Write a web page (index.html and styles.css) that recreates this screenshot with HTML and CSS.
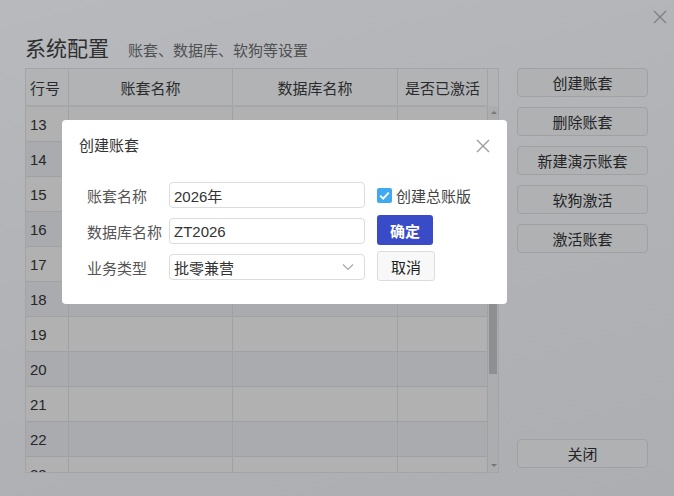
FILE: index.html
```html
<!DOCTYPE html>
<html lang="zh">
<head>
<meta charset="utf-8">
<title>系统配置</title>
<link rel="stylesheet" href="styles.css">
</head>
<body>
<div class="window">
  <svg class="win-close" width="14" height="14" viewBox="0 0 14 14"><path d="M1 1L13 13M13 1L1 13" stroke="#7d7f82" stroke-width="1.3" fill="none"/></svg>
  <div class="header">
    <span class="title">系统配置</span>
    <span class="subtitle">账套、数据库、软狗等设置</span>
  </div>
  <div class="body">
    <div class="table">
      <div class="grid">
        <div class="thead">
          <div class="th c1">行号</div>
          <div class="th c2">账套名称</div>
          <div class="th c3">数据库名称</div>
          <div class="th c4">是否已激活</div>
        </div>
        <div class="rows">
          <div class="tr odd"><div class="td c1">13</div><div class="td c2"></div><div class="td c3"></div><div class="td c4"></div></div>
          <div class="tr"><div class="td c1">14</div><div class="td c2"></div><div class="td c3"></div><div class="td c4"></div></div>
          <div class="tr odd"><div class="td c1">15</div><div class="td c2"></div><div class="td c3"></div><div class="td c4"></div></div>
          <div class="tr"><div class="td c1">16</div><div class="td c2"></div><div class="td c3"></div><div class="td c4"></div></div>
          <div class="tr odd"><div class="td c1">17</div><div class="td c2"></div><div class="td c3"></div><div class="td c4"></div></div>
          <div class="tr"><div class="td c1">18</div><div class="td c2"></div><div class="td c3"></div><div class="td c4"></div></div>
          <div class="tr odd"><div class="td c1">19</div><div class="td c2"></div><div class="td c3"></div><div class="td c4"></div></div>
          <div class="tr"><div class="td c1">20</div><div class="td c2"></div><div class="td c3"></div><div class="td c4"></div></div>
          <div class="tr odd"><div class="td c1">21</div><div class="td c2"></div><div class="td c3"></div><div class="td c4"></div></div>
          <div class="tr"><div class="td c1">22</div><div class="td c2"></div><div class="td c3"></div><div class="td c4"></div></div>
          <div class="tr odd"><div class="td c1">23</div><div class="td c2"></div><div class="td c3"></div><div class="td c4"></div></div>
        </div>
      </div>
      <div class="scrollbar">
        <div class="sb-head"></div>
        <div class="sb-track">
          <span class="arrow up"></span>
          <div class="thumb"></div>
          <span class="arrow down"></span>
        </div>
      </div>
    </div>
    <div class="side">
      <button class="btn">创建账套</button>
      <button class="btn">删除账套</button>
      <button class="btn">新建演示账套</button>
      <button class="btn">软狗激活</button>
      <button class="btn">激活账套</button>
      <button class="btn close-btn">关闭</button>
    </div>
  </div>

  <div class="dialog">
    <div class="dlg-head">
      <span class="dlg-title">创建账套</span>
      <svg class="dlg-close" width="14" height="14" viewBox="0 0 14 14"><path d="M1 1L13 13M13 1L1 13" stroke="#9a9a9a" stroke-width="1.3" fill="none"/></svg>
    </div>
    <div class="form">
      <label class="lbl">账套名称</label>
      <div class="input">2026年</div>
      <div class="extra">
        <span class="checkbox"><svg width="15" height="15" viewBox="0 0 15 15"><rect width="15" height="15" rx="2" fill="#40a9f0"/><path d="M3.2 7.6L6.2 10.6L11.8 4.6" stroke="#fff" stroke-width="2" fill="none"/></svg></span>
        <span class="check-text">创建总账版</span>
      </div>
      <label class="lbl">数据库名称</label>
      <div class="input">ZT2026</div>
      <div class="extra"><button class="primary">确定</button></div>
      <label class="lbl">业务类型</label>
      <div class="input select">批零兼营<svg class="chev" width="12" height="8" viewBox="0 0 12 8"><path d="M1 1.5L6 6.5L11 1.5" stroke="#aaa" stroke-width="1.2" fill="none"/></svg></div>
      <div class="extra"><button class="secondary">取消</button></div>
    </div>
  </div>
</div>
</body>
</html>
```

FILE: styles.css
```css
* { box-sizing: border-box; }
html, body { margin: 0; padding: 0; }
body {
  font-family: "Liberation Sans", "Noto Sans CJK SC", sans-serif;
  font-size: 15px;
  color: #2a2b2c;
}
.window {
  position: relative;
  width: 674px;
  height: 496px;
  overflow: hidden;
  background: linear-gradient(165deg, #b7b9bc 0%, #b1b3b6 45%, #acaeb1 100%);
  padding: 30px 26px 0 25px;
}
.win-close { position: absolute; left: 653px; top: 10px; }
.header {
  display: flex;
  align-items: baseline;
  height: 38px;
  padding-top: 2px;
}
.title { font-size: 21px; color: #2e2f30; }
.subtitle { font-size: 15px; color: #4f5052; margin-left: 19px; }
.body { display: flex; gap: 18px; }
.table {
  display: flex;
  width: 475px;
  height: 405px;
  border: 1px solid #a2a4a6;
  overflow: hidden;
}
.grid { width: 462px; display: flex; flex-direction: column; }
.thead {
  flex: none;
  display: flex;
  height: 38px;
  background: #b2b3b5;
  border-bottom: 2px solid #a6a7a9;
}
.th {
  display: flex;
  align-items: center;
  justify-content: center;
  border-right: 1px solid #a3a4a6;
  color: #2a2b2c;
}
.c1 { width: 43px; flex: none; }
.c2 { width: 164px; flex: none; }
.c3 { width: 165px; flex: none; }
.c4 { width: 90px; flex: none; }
.th.c1 { justify-content: flex-start; padding-left: 4px; }
.rows { flex: none; }
.tr { display: flex; height: 35px; background: #a9abaf; border-bottom: 1px solid #a0a1a4; }
.tr.odd { background: #b1b1b1; }
.td { border-right: 1px solid #a0a1a4; display: flex; align-items: center; }
.td.c1 { padding-left: 4px; color: #262728; font-size: 15px; }
.scrollbar {
  width: 12px;
  display: flex;
  flex-direction: column;
  background: #acadaf;
}
.sb-head { flex: none; height: 37px; background: #b2b3b5; }
.sb-track { flex: 1; position: relative; }
.thumb {
  position: absolute;
  left: 1px; right: 1px;
  top: 18px;
  height: 250px;
  background: #8e8f91;
}
.arrow { position: absolute; left: 3px; width: 0; height: 0; border-left: 3px solid transparent; border-right: 3px solid transparent; }
.arrow.up { top: 5px; border-bottom: 3px solid #777; }
.arrow.down { bottom: 5px; border-top: 3px solid #777; }
.side {
  width: 131px;
  height: 400px;
  display: flex;
  flex-direction: column;
  gap: 10px;
}
.btn {
  height: 29px;
  font: inherit;
  font-size: 15px;
  color: #232425;
  background: #b0b1b3;
  border: 1px solid #9fa1a3;
  border-radius: 4px;
}
.close-btn { margin-top: auto; }

.dialog {
  position: absolute;
  left: 62px;
  top: 120px;
  width: 445px;
  height: 184px;
  background: #fff;
  border-radius: 4px;
}
.dlg-head {
  display: flex;
  justify-content: space-between;
  align-items: center;
  padding: 11px 17px 0 17px;
  height: 38px;
}
.dlg-title { font-size: 15px; color: #333; }
.dlg-close { margin-top: 2px; }
.form {
  margin-top: 24px;
  padding-left: 25px;
  display: grid;
  grid-template-columns: 82px 196px auto;
  grid-auto-rows: 26px;
  row-gap: 10px;
  align-items: center;
}
.lbl { color: #555; font-size: 15px; }
.input {
  height: 26px;
  border: 1px solid #dcdcdc;
  border-radius: 4px;
  padding-left: 4px;
  display: flex;
  align-items: center;
  color: #333;
  font-size: 15px;
}
.select { justify-content: space-between; padding-right: 10px; }
.extra { margin-left: 12px; display: flex; align-items: center; }
.checkbox { display: flex; width: 15px; height: 15px; margin-right: 4px; }
.check-text { color: #444; font-size: 15px; }
.primary {
  width: 56px;
  height: 30px;
  font: inherit;
  font-size: 15px;
  font-weight: bold;
  color: #fff;
  background: #3a4bc8;
  border: none;
  border-radius: 3px;
  margin-top: -2px;
}
.secondary {
  width: 58px;
  height: 30px;
  font: inherit;
  font-size: 15px;
  color: #222;
  background: #f8f8f8;
  border: 1px solid #dcdcdc;
  border-radius: 3px;
  margin-top: -2px;
}
```
